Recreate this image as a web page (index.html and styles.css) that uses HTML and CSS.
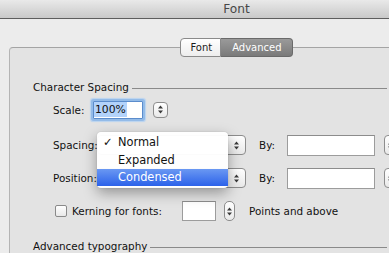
FILE: index.html
```html
<!DOCTYPE html>
<html lang="en">
<head>
  <meta charset="UTF-8" />
  <title>Font</title>
  <link rel="stylesheet" href="styles.css">
</head>
<body>
  <div class="window">
    <div class="titlebar">Font</div>

    <div class="tabs">
      <div class="tab">Font</div>
      <div class="tab active">Advanced</div>
    </div>

    <div class="group">
      <div class="section">
        <span>Character Spacing</span>
        <div class="rule"></div>
      </div>

      <div class="row row-scale">
        <label class="label label-scale">Scale:</label>
        <div class="field focused"><span class="selected">100%</span></div>
        <div class="stepper stepper-scale">
          <svg class="arrows" width="5" height="9" viewBox="0 0 5 9"><path d="M0 3.5L2.5 0.5L5 3.5Z M0 5.5L2.5 8.5L5 5.5Z" fill="#3a3a3a"/></svg>
        </div>
      </div>

      <div class="row row-spacing">
        <label class="label label-popup">Spacing:</label>
        <div class="popup">
          <svg class="arrows" width="5" height="9" viewBox="0 0 5 9"><path d="M0 3.5L2.5 0.5L5 3.5Z M0 5.5L2.5 8.5L5 5.5Z" fill="#3a3a3a"/></svg>
        </div>
        <label class="label label-by">By:</label>
        <div class="field field-by"></div>
        <div class="stepper stepper-by">
          <svg class="arrows" width="5" height="9" viewBox="0 0 5 9"><path d="M0 3.5L2.5 0.5L5 3.5Z M0 5.5L2.5 8.5L5 5.5Z" fill="#3a3a3a"/></svg>
        </div>
      </div>

      <div class="row row-position">
        <label class="label label-popup">Position:</label>
        <div class="popup">
          <svg class="arrows" width="5" height="9" viewBox="0 0 5 9"><path d="M0 3.5L2.5 0.5L5 3.5Z M0 5.5L2.5 8.5L5 5.5Z" fill="#3a3a3a"/></svg>
        </div>
        <label class="label label-by">By:</label>
        <div class="field field-by"></div>
        <div class="stepper stepper-by">
          <svg class="arrows" width="5" height="9" viewBox="0 0 5 9"><path d="M0 3.5L2.5 0.5L5 3.5Z M0 5.5L2.5 8.5L5 5.5Z" fill="#3a3a3a"/></svg>
        </div>
      </div>

      <div class="row row-kerning">
        <div class="checkbox"></div>
        <label class="label label-kerning">Kerning for fonts:</label>
        <div class="field field-small"></div>
        <div class="stepper stepper-small">
          <svg class="arrows" width="5" height="9" viewBox="0 0 5 9"><path d="M0 3.5L2.5 0.5L5 3.5Z M0 5.5L2.5 8.5L5 5.5Z" fill="#3a3a3a"/></svg>
        </div>
        <span class="label label-points">Points and above</span>
      </div>

      <div class="section section-last">
        <span>Advanced typography</span>
        <div class="rule"></div>
      </div>

      <div class="menu">
        <div class="menu-item"><span class="check">✓</span>Normal</div>
        <div class="menu-item">Expanded</div>
        <div class="menu-item highlighted">Condensed</div>
      </div>
    </div>
  </div>
</body>
</html>
```

FILE: styles.css
```css
body {
  margin: 0;
  background-color: #ececec;
  font-family: "DejaVu Sans", sans-serif;
  overflow: hidden;
}

.window {
  width: 473px;
  height: 253px;
  overflow: hidden;
}

.titlebar {
  height: 18px;
  line-height: 18px;
  text-align: center;
  font-size: 12.2px;
  color: #474747;
  background: linear-gradient(#e9e9e9, #c9c9c9);
  border-bottom: 1px solid #5e5e5e;
}

.tabs {
  display: flex;
  justify-content: center;
  margin-top: 19px;
  position: relative;
  z-index: 1;
}

.tab {
  height: 17px;
  line-height: 17px;
  font-size: 10px;
  padding: 0 8px 0 9px;
  color: #1c1c1c;
  background: linear-gradient(#ffffff, #ededed);
  border: 1px solid #8a8a8a;
  border-radius: 4px 0 0 4px;
}

.tab.active {
  color: #fff;
  padding: 0 10px 0 11px;
  background: linear-gradient(#9a9a9a, #7a7a7a);
  border-color: #6a6a6a;
  border-left: none;
  border-radius: 0 4px 4px 0;
}

.group {
  position: relative;
  margin: -10px 9px 0;
  height: 240px;
  padding: 32px 0 0 23px;
  background-color: #e3e3e3;
  border: 1px solid #b4b4b4;
  border-top-color: #a4a4a4;
  border-radius: 4px;
  font-size: 10.4px;
  color: #111;
}

.section {
  display: flex;
  align-items: center;
  width: 354px;
  height: 14px;
}

.section .rule {
  flex: 1;
  height: 1px;
  margin: 2px 0 0 3px;
  background-color: #8a8a8a;
}

.section-last {
  margin-top: 17px;
}

.row {
  display: flex;
  align-items: center;
  margin-left: 20px;
}

.row-scale {
  height: 23px;
  margin-top: 4px;
}

.row-spacing {
  height: 22px;
  margin-top: 13px;
}

.row-position,
.row-kerning {
  height: 22px;
  margin-top: 11px;
}

.label {
  white-space: nowrap;
}

.label-scale {
  width: 40px;
}

.label-popup {
  width: 44px;
}

.label-by {
  width: 28px;
  margin-left: 13px;
}

.label-kerning {
  width: 110px;
  margin-left: 5px;
}

.label-points {
  margin-left: 14px;
}

.field {
  box-sizing: border-box;
  flex-shrink: 0;
  background-color: #fff;
  border: 1px solid #9c9c9c;
  border-top-color: #8c8c8c;
}

.field.focused {
  width: 50px;
  height: 18px;
  border-color: #5b8ccc;
  border-radius: 1px;
  box-shadow: 0 0 0 2px #93bbe8, 0 0 1px 3px #b9d3f0;
  line-height: 15px;
  font-size: 10.8px;
}

.selected {
  background-color: #b3d3fb;
  padding: 1px;
}

.field-by {
  width: 88px;
  height: 21px;
}

.field-small {
  width: 34px;
  height: 20px;
}

.stepper,
.popup {
  box-sizing: border-box;
  flex-shrink: 0;
  display: flex;
  align-items: center;
  justify-content: flex-end;
  background: linear-gradient(#ffffff, #e9e9e9);
  border: 1px solid #8d8d8d;
  border-radius: 4px;
}

.arrows {
  display: block;
  margin-right: 4px;
}

.stepper-scale {
  width: 15px;
  height: 16px;
  margin-left: 10px;
}

.stepper-by {
  width: 14px;
  height: 20px;
  margin-left: 9px;
}

.stepper-small {
  width: 11px;
  height: 20px;
  margin-left: 8px;
  border-radius: 5px;
}

.stepper-small .arrows {
  margin-right: 2px;
}

.popup {
  width: 149px;
  height: 20px;
}

.popup .arrows {
  margin-right: 6px;
}

.checkbox {
  box-sizing: border-box;
  width: 12px;
  height: 12px;
  margin-left: 2px;
  background: linear-gradient(#ffffff, #e8e8e8);
  border: 1px solid #8a8a8a;
  border-radius: 2px;
}

.menu {
  position: absolute;
  left: 87px;
  top: 84px;
  width: 131px;
  padding: 1px 0 2px;
  background-color: rgba(255, 255, 255, 0.97);
  border-radius: 4px;
  box-shadow: 0 5px 14px rgba(0, 0, 0, 0.35), 0 0 1px rgba(0, 0, 0, 0.3);
  font-size: 11.4px;
  z-index: 2;
}

.menu-item {
  height: 18px;
  line-height: 18px;
  padding-left: 21px;
  position: relative;
  color: #111;
}

.menu-item.highlighted {
  height: 17px;
  line-height: 17px;
  color: #fff;
  background: linear-gradient(#6a98f2, #2c62ea);
}

.check {
  position: absolute;
  left: 6px;
}
```
